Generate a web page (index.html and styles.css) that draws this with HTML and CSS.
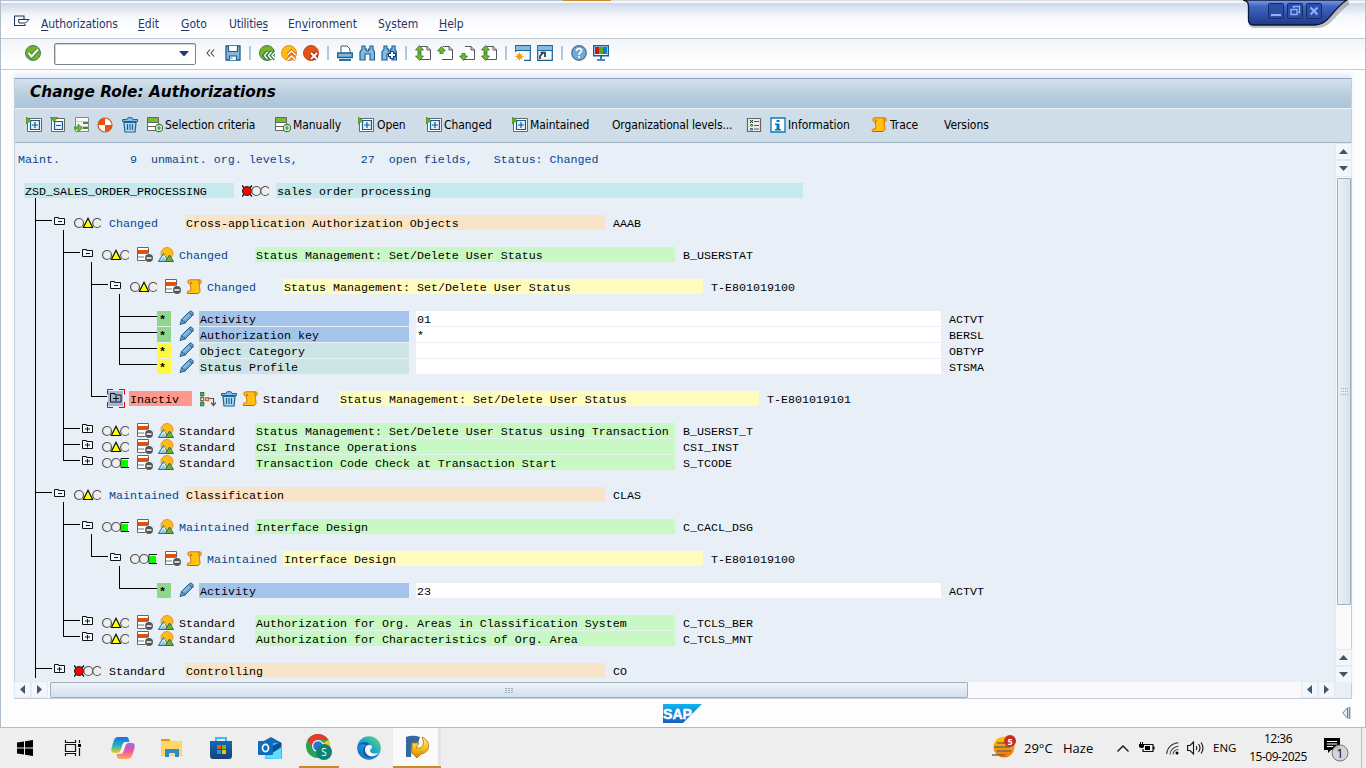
FILE: index.html
```html
<!DOCTYPE html>
<html lang="en">
<head>
<meta charset="utf-8">
<title>Change Role: Authorizations</title>
<link rel="stylesheet" href="styles.css">
</head>
<body>
<svg class="defs" aria-hidden="true">
  <defs>
    <linearGradient id="gSap" x2="0" y2="1"><stop offset="0" stop-color="#0bb6ee"/><stop offset="1" stop-color="#1c5cc0"/></linearGradient>
    <linearGradient id="gWin" x2="0" y2="1"><stop offset="0" stop-color="#7fa0e8"/><stop offset=".25" stop-color="#4166c2"/><stop offset="1" stop-color="#1d3a86"/></linearGradient>
    <linearGradient id="gCopA" x2="0" y2="1"><stop offset="0" stop-color="#1f6fe0"/><stop offset=".5" stop-color="#19b0c8"/><stop offset="1" stop-color="#e8d020"/></linearGradient>
    <linearGradient id="gCopB" x2="0" y2="1"><stop offset="0" stop-color="#9a6af0"/><stop offset=".5" stop-color="#f0529a"/><stop offset="1" stop-color="#ffb060"/></linearGradient>
    <linearGradient id="gEdge" x1="0" y1="1" x2="1" y2="0"><stop offset="0" stop-color="#1160b8"/><stop offset=".5" stop-color="#1aa0dc"/><stop offset="1" stop-color="#60e060"/></linearGradient>
    <linearGradient id="gSun" x2="0" y2="1"><stop offset="0" stop-color="#ffc800"/><stop offset="1" stop-color="#f07010"/></linearGradient>
    <linearGradient id="gStore" x2="0" y2="1"><stop offset="0" stop-color="#1568b8"/><stop offset="1" stop-color="#173f75"/></linearGradient>
    <linearGradient id="gGold" x2="0" y2="1"><stop offset="0" stop-color="#fff0a0"/><stop offset=".6" stop-color="#f8b810"/><stop offset="1" stop-color="#c88000"/></linearGradient>
  </defs>
  <symbol id="fm" viewBox="0 0 12 10"><path d="M.5 8.500V1.500h4v1h6v6z" fill="#f4f7fb" stroke="#111"/><path d="M4 5.500h4" stroke="#111"/></symbol>
  <symbol id="fp" viewBox="0 0 12 10"><path d="M.5 8.500V.500h4v1h6v7z" fill="#f4f7fb" stroke="#111"/><path d="M3 5h5M5.500 3v4.500" stroke="#111"/></symbol>
  <symbol id="ly" viewBox="0 0 27 12"><g fill="#eee" stroke="#555" stroke-width="1.200"><circle cx="5" cy="6" r="4.500"/><circle cx="23.200" cy="6" r="4.500"/></g><path d="M14 1.300L18.600 10.500H9.400z" fill="#ff0" stroke="#111" stroke-width="1.200"/></symbol>
  <symbol id="lg" viewBox="0 0 27 12"><g fill="#eee" stroke="#555" stroke-width="1.200"><circle cx="5" cy="6" r="4.500"/><circle cx="14" cy="6" r="4.500"/></g><path d="M27 1.500h-8v9h8" fill="#fff" stroke="#111"/><path d="M20 3h6v7h-6z" fill="#0f0"/></symbol>
  <symbol id="lr" viewBox="0 0 27 12"><path d="M0 .5l10 11M10 .5L0 11.500" stroke="#111" stroke-width="1.400"/><circle cx="5" cy="6" r="4.500" fill="#f00" stroke="#222"/><g fill="#eee" stroke="#555" stroke-width="1.200"><circle cx="14.300" cy="6" r="4.500"/><circle cx="23.200" cy="6" r="4.500"/></g></symbol>
  <symbol id="doc" viewBox="0 0 16 16"><path d="M.5 .5h11v13h-11z" fill="#fff" stroke="#666"/><path d="M1 3h10v3H1z" fill="#e05010"/><path d="M1 6.500h10M1 10h6" stroke="#777"/><circle cx="12" cy="11" r="4.500" fill="#fff"/><circle cx="12" cy="11" r="4" fill="#555"/><path d="M9.500 11h5" stroke="#fff" stroke-width="1.500"/></symbol>
  <symbol id="mt" viewBox="0 0 16 16"><circle cx="9" cy="6.500" r="6" fill="#fdbc14" stroke="#ee9420"/><path d="M.4 14.500L5.500 6.500l4.500 8z" fill="#8fc0dd" stroke="#28709a"/><path d="M3 12.500l3-4 1.500 4" fill="none" stroke="#fff"/><path d="M7.500 14.500L11.500 8l4 6.500z" fill="#70b32c" stroke="#277345"/></symbol>
  <symbol id="sc" viewBox="0 0 16 16"><path d="M3.500.8h10c2.500 0 2.500 4 0 4-.8 2.500.8 5 .5 7.500-.3 1.700-1.500 2.200-3 2.200H1.500c-1.500-2 1-3 3-2.500C5.500 10 4 7 4.300 5 1.500 5.500.8 1.200 3.500.8z" fill="#ffc20e" stroke="#dd6d12"/><path d="M4.300 5C7 5 5.500 2.500 4 3M13 1.200v3.500M1.500 14.500h10" fill="none" stroke="#d05a10"/></symbol>
  <symbol id="pn" viewBox="0 0 16 16"><path d="M1 14.500l1.500-5 8-8c1.500-1.500 5 1.500 3.500 3.500l-8 8z" fill="#6ba3d0" stroke="#1c5f94"/><path d="M3.500 11L11 3.500" stroke="#b9dcf0"/><path d="M10 2.500l3.500 3.500M2.500 9.500l4 3.500" stroke="#1c4f80"/></symbol>
  <symbol id="tr" viewBox="0 0 16 16"><path d="M.5 4.500V2.500h4.500l1-1.800h4l1 1.800h4.500v2z" fill="#8bbbe0" stroke="#15659b"/><path d="M2 5.500h12l-1 9.500H3z" fill="#b8d8ee" stroke="#15659b" stroke-width="1.200"/><path d="M5.500 7v6M8 7v6M10.500 7v6" stroke="#15659b" stroke-width="1.200"/></symbol>
  <symbol id="hi" viewBox="0 0 16 16"><path d="M2 4v9" stroke="#777"/><g fill="#fff" stroke-width="1.200"><path d="M.7 1.700h3v3h-3zM.7 11.700h3v3h-3z" fill="#80bc40" stroke="#337a3c"/><path d="M.7 6.700h3v3h-3z" stroke="#666"/><path d="M5.700 6.700h3v3h-3z" fill="#ffcc50" stroke="#e06510"/></g><path d="M9 7.500h4.500V14M11 11.500l2.500 3 2.500-3" fill="none" stroke="#555" stroke-width="1.200"/></symbol>
  <symbol id="ex" viewBox="0 0 16 16"><path d="M1.500 1.500h14v13h-14z" fill="#fff" stroke="#666"/><path d="M4.500 3.500h9v9h-9z" fill="#e6f1fa" stroke="#125c94" stroke-width="1.200"/><path d="M6 8h6M9 5v6" stroke="#125c94" stroke-width="1.200"/><path d="M0 0l5 3.500-5 3.500z" fill="#6aac22" stroke="#39803c" stroke-width=".6"/></symbol>
  <symbol id="co" viewBox="0 0 16 16"><path d="M1.500 1.500h13v13h-13z" fill="#fff" stroke="#666"/><path d="M4.500 4.500h8v8h-8z" fill="#e6f1fa" stroke="#125c94" stroke-width="1.200"/><path d="M6 8.500h5" stroke="#125c94"/><path d="M0 0h8L4 5z" fill="#6aac22" stroke="#39803c" stroke-width=".6"/></symbol>
  <symbol id="mv" viewBox="0 0 16 16"><path d="M1.500.5h13v14h-13z" fill="#f8f8f8" stroke="#888"/><path d="M2 4.500h12M2 9.500h12" stroke="#ccc"/><path d="M9 6h5M9 11h5" stroke="#3f8a2a" stroke-width="2"/><path d="M0 10h4V7l4.500 4L4 15v-3H0z" fill="#75b82a" stroke="#3a8038" stroke-width=".7"/></symbol>
  <symbol id="gen" viewBox="0 0 16 16"><circle cx="8" cy="8" r="7" fill="#fff" stroke="#d84e12" stroke-width="1.200"/><path d="M8 8V1A7 7 0 0 0 1 8zM8 8v7a7 7 0 0 0 7-7z" fill="#e05512"/></symbol>
  <symbol id="ad" viewBox="0 0 16 16"><path d="M.5.5h11v13H.5z" fill="#fff" stroke="#666"/><path d="M1 1h10v4H1z" fill="#78b82a"/><path d="M1 5.500h10M1 9.500h7" stroke="#666"/><circle cx="12" cy="11" r="3.700" fill="#e4f5e4" stroke="#3b843e" stroke-width="1.200"/><path d="M9.800 11h4.400M12 8.800v4.400" stroke="#3b843e" stroke-width="1.200"/></symbol>
  <symbol id="ls" viewBox="0 0 16 16"><path d="M1.500 1.500h13v13h-13z" fill="#eee" stroke="#666" stroke-width="1.200"/><path d="M8 4.500h5M8 8.500h5M8 12h5" stroke="#555"/><path d="M4 3h3v3H4z" fill="#f5c510"/><path d="M4 3l3 3M7 3L4 6" stroke="#333"/><path d="M4.500 7.500h2v1.500h-2z" fill="#fff" stroke="#27863c"/><path d="M4.500 11.500h2v1.500h-2z" fill="#fff" stroke="#17609b"/></symbol>
  <symbol id="in" viewBox="0 0 16 16"><path d="M1 1h14v14H1z" fill="#fff" stroke="#0878bd" stroke-width="1.300"/><path d="M6.500 3h3v2h-3zM5 6.500h4.500V12H11v1.500H5V12h1.500V8H5z" fill="#0878bd"/></symbol>
  <symbol id="ok" viewBox="0 0 16 16"><circle cx="8" cy="8" r="7.500" fill="#70b42a" stroke="#418445" /><path d="M3.500 8l3 3.500L13 4.500" fill="none" stroke="#418445" stroke-width="4"/><path d="M3.500 8l3 3.500L13 4.500" fill="none" stroke="#fff" stroke-width="2"/></symbol>
  <symbol id="sv" viewBox="0 0 16 16"><path d="M1 1h14v14H1z" fill="#8bb8d8" stroke="#115f95" stroke-width="1.300"/><path d="M3.500 1v5.500h9V1M4.500 15v-4h7v4" fill="#fff" stroke="#115f95" stroke-width="1.200"/><path d="M5.500 12h2v2h-2z" fill="#8bb8d8"/></symbol>
  <symbol id="bk" viewBox="0 0 16 16"><circle cx="8" cy="8" r="7.500" fill="#73b52b" stroke="#40834a"/><path d="M8.500 6.500L5 10.500l3.500 4M12.500 6.500L9 10.500l3.500 4M16 6.500L12.500 10.500l3.500 4" fill="none" stroke="#31783c" stroke-width="3.200"/><path d="M8.500 7L5.500 10.500l3 3.500M12.500 7l-3 3.500 3 3.500M16 7l-3 3.500 3 3.500" fill="none" stroke="#fff" stroke-width="1.400"/></symbol>
  <symbol id="xt" viewBox="0 0 16 16"><circle cx="8" cy="8" r="7.500" fill="#fdbb13" stroke="#ea9212"/><path d="M6.500 10l4-4 4 4M6.500 15l4-4 4 4" fill="none" stroke="#df6512" stroke-width="3.200"/><path d="M6.500 10l4-4 4 4M6.500 15l4-4 4 4" fill="none" stroke="#fff" stroke-width="1.500"/></symbol>
  <symbol id="cn" viewBox="0 0 16 16"><circle cx="8" cy="8" r="7.500" fill="#df5515" stroke="#c14816"/><path d="M8 8l6 6M14 8l-6 6" stroke="#a92f12" stroke-width="4"/><path d="M8 8l6 6M14 8l-6 6" stroke="#fff" stroke-width="2"/></symbol>
  <symbol id="pr" viewBox="0 0 16 16"><path d="M4 8V1h6l3 3v4" fill="#fff" stroke="#555"/><path d="M.7 8h14.600v4.500H.7z" fill="#88b8dc" stroke="#14619a" stroke-width="1.300"/><path d="M2 15h12" stroke="#14619a" stroke-width="1.800"/></symbol>
  <symbol id="fd" viewBox="0 0 16 16"><path d="M3 1h3v3h1.500v2h2V4H11V1h3v3l1.500 3v8H11V9H6v6H1V7l2-3z" fill="#8bb9dc" stroke="#15639a" stroke-width="1.200"/></symbol>
  <symbol id="fn" viewBox="0 0 16 16"><use href="#fd"/><path d="M11 6v8M7 10h8" stroke="#173f7e" stroke-width="4.500"/><path d="M11 7v6M8 10h6" stroke="#fff" stroke-width="2"/></symbol>
  <symbol id="pg" viewBox="0 0 16 16"><path d="M6 1.500h6l3.500 3.500v9.500H5" fill="#fff" stroke="#555"/><path d="M12 1v4h4" fill="none" stroke="#555"/></symbol>
  <symbol id="au" viewBox="0 0 9 8"><path d="M4.500.5L8.500 5H6v3H3V5H.5z" fill="#74b62a" stroke="#35743d" stroke-width=".8"/></symbol>
  <symbol id="p1" viewBox="0 0 16 16"><use href="#pg"/><use href="#au" width="9" height="8"/><use href="#au" width="9" height="8" transform="translate(0 16) scale(1 -1)"/></symbol>
  <symbol id="p2" viewBox="0 0 16 16"><use href="#pg"/><use href="#au" y="1" width="9" height="8"/></symbol>
  <symbol id="p3" viewBox="0 0 16 16"><use href="#pg"/><use href="#au" width="9" height="8" transform="translate(0 16) scale(1 -1)"/></symbol>
  <symbol id="p4" viewBox="0 0 16 16"><use href="#pg"/><use href="#au" width="9" height="8"/><use href="#au" width="9" height="8" transform="translate(0 16) scale(1 -1)"/></symbol>
  <symbol id="w0" viewBox="0 0 16 16"><path d="M.7.7h14.600v14.600H.7z" fill="#f4f8fc" stroke="#15649c" stroke-width="1.200"/><path d="M1 1h14v4H1z" fill="#8bb8dc"/><path d="M1 5.500h14" stroke="#15649c"/></symbol>
  <symbol id="w1" viewBox="0 0 16 16"><use href="#w0"/><path d="M0 7h9v9H0z" fill="#fff"/><circle cx="4.500" cy="11.500" r="2.800" fill="#fdb515"/><path d="M4.500 7.500v8M.5 11.500h8M1.500 8.500l6 6M7.500 8.500l-6 6" stroke="#f39b15"/></symbol>
  <symbol id="w2" viewBox="0 0 16 16"><use href="#w0"/><path d="M3 14V11l4-4M3.500 7.500H8V12" fill="none" stroke="#333" stroke-width="1.700"/></symbol>
  <symbol id="hp" viewBox="0 0 16 16"><circle cx="8" cy="8" r="7.300" fill="#74a9d4" stroke="#456f94" stroke-width="1.200"/><path d="M5.500 6C5.500 2.500 11 3 10.500 6 10.300 7.500 8 7.500 8 10M8 11v2" fill="none" stroke="#fff" stroke-width="1.700"/></symbol>
  <symbol id="mo" viewBox="0 0 16 16"><path d="M.7.7h14.600v10H.7z" fill="#fff" stroke="#16619a" stroke-width="1.400"/><path d="M2 2h4v7H2z" fill="#d8101d"/><path d="M6 2h4v7H6z" fill="#58a812"/><path d="M10 2h4v7h-4z" fill="#087fc7"/><path d="M8 11v3M4 15h8" stroke="#16619a" stroke-width="1.700"/></symbol>
</svg>

<div class="window">
  <div class="topline"><i></i><b></b></div>
  <div class="menubar">
    <svg class="cmd" viewBox="0 0 16 13"><path d="M8 10.500H.5V1H10v3M11 9v1.500H7" fill="none" stroke="#1f3560" stroke-width="1.100"/><path d="M4.500 4.500H15L11.500 8H5z" fill="#fff" stroke="#1f3560"/></svg>
    <span class="m1"><u>A</u>uthorizations</span><span class="m2"><u>E</u>dit</span><span class="m3"><u>G</u>oto</span><span class="m4">Utilitie<u>s</u></span><span class="m5">En<u>v</u>ironment</span><span class="m6">S<u>y</u>stem</span><span class="m7"><u>H</u>elp</span>
  </div>
  <div class="stdbar">
    <svg class="i ok"><use href="#ok"/></svg>
    <div class="combo"><svg width="10" height="6"><path d="M0 0h10L5 5.500z" fill="#1d3d70"/></svg></div>
    <svg class="chev" width="9" height="8" viewBox="0 0 9 8"><path d="M4 .5L1 4l3 3.500M8 .5L5 4l3 3.500" fill="none" stroke="#444" stroke-width="1.100"/></svg>
    <svg class="i"><use href="#sv"/></svg><hr>
    <svg class="i"><use href="#bk"/></svg><svg class="i"><use href="#xt"/></svg><svg class="i"><use href="#cn"/></svg><hr>
    <svg class="i"><use href="#pr"/></svg><svg class="i"><use href="#fd"/></svg><svg class="i"><use href="#fn"/></svg><hr>
    <svg class="i"><use href="#p1"/></svg><svg class="i"><use href="#p2"/></svg><svg class="i"><use href="#p3"/></svg><svg class="i"><use href="#p4"/></svg><hr>
    <svg class="i"><use href="#w1"/></svg><svg class="i"><use href="#w2"/></svg><hr>
    <svg class="i"><use href="#hp"/></svg><svg class="i"><use href="#mo"/></svg>
  </div>

  <main class="panel">
    <h1>Change Role: Authorizations</h1>
    <div class="appbar">
      <span class="a24"><svg class="i"><use href="#ex"/></svg></span><span class="a24"><svg class="i"><use href="#co"/></svg></span><span class="a23"><svg class="i"><use href="#mv"/></svg></span><span class="a24"><svg class="i"><use href="#gen"/></svg></span><span class="a26"><svg class="i"><use href="#tr"/></svg></span>
      <span class="sel"><svg class="i"><use href="#ad"/></svg>Selection criteria</span>
      <span class="man"><svg class="i"><use href="#ad"/></svg>Manually</span>
      <span class="opn"><svg class="i"><use href="#ex"/></svg>Open</span>
      <span class="chg"><svg class="i"><use href="#ex"/></svg>Changed</span>
      <span class="mnt"><svg class="i"><use href="#ex"/></svg>Maintained</span>
      <span class="org">Organizational levels...</span>
      <span class="a24"><svg class="i"><use href="#ls"/></svg></span>
      <span class="inf"><svg class="i"><use href="#in"/></svg>Information</span>
      <span class="trc"><svg class="i"><use href="#sc"/></svg>Trace</span>
      <span class="ver">Versions</span>
    </div>
    <div class="body">
      <div class="list">
        <div class="summary">Maint.          9  unmaint. org. levels,         27  open fields,   Status: Changed</div>
        <div class="root"><span class="role">ZSD_SALES_ORDER_PROCESSING</span><svg class="l"><use href="#lr"/></svg><span class="roletext">sales order processing</span></div>
        <ul class="tree">
          <li class="gap"><div class="row"><hr><svg class="f"><use href="#fm"/></svg><svg class="l"><use href="#ly"/></svg><em>Changed</em><span class="d cls">Cross-application Authorization Objects</span>AAAB</div>
            <ul>
              <li class="gap"><div class="row"><hr><svg class="f"><use href="#fm"/></svg><svg class="l"><use href="#ly"/></svg><svg class="i"><use href="#doc"/></svg><svg class="i"><use href="#mt"/></svg><em>Changed</em><span class="d obj">Status Management: Set/Delete User Status</span>B_USERSTAT</div>
                <ul>
                  <li class="gap"><div class="row"><hr><svg class="f"><use href="#fm"/></svg><svg class="l"><use href="#ly"/></svg><svg class="i"><use href="#doc"/></svg><svg class="i"><use href="#sc"/></svg><em>Changed</em><span class="d aut">Status Management: Set/Delete User Status</span>T-E801019100</div>
                    <ul>
                      <li class="gap"><div class="row field"><hr><b class="star">*</b><svg class="p"><use href="#pn"/></svg><span class="name set">Activity</span><span class="val">01</span>ACTVT</div></li>
                      <li><div class="row field"><hr><b class="star">*</b><svg class="p"><use href="#pn"/></svg><span class="name set">Authorization key</span><span class="val">*</span>BERSL</div></li>
                      <li><div class="row field"><hr><b class="star open">*</b><svg class="p"><use href="#pn"/></svg><span class="name">Object Category</span><span class="val"></span>OBTYP</div></li>
                      <li><div class="row field"><hr><b class="star open">*</b><svg class="p"><use href="#pn"/></svg><span class="name">Status Profile</span><span class="val"></span>STSMA</div></li>
                    </ul>
                  </li>
                  <li class="gap"><div class="row inactive"><hr><svg class="focus" viewBox="0 0 18 19"><path d="M1 2h15v15H1z" fill="#a0b8d4"/><path d="M.5 5.500V.500H6M12 .5h5.500v5M.5 13v5.500H6M12 18.500h5.500V13" fill="none" stroke="#e00000"/><path d="M3.500 13V4.500H8v1.500h6V13z" fill="none" stroke="#111"/><path d="M6 9.500h6M9 7v5" stroke="#111"/></svg><span class="flag">Inactiv</span><svg class="i first"><use href="#hi"/></svg><svg class="i"><use href="#tr"/></svg><svg class="i"><use href="#sc"/></svg><em class="std">Standard</em><span class="d aut">Status Management: Set/Delete User Status</span>T-E801019101</div></li>
                </ul>
              </li>
              <li class="gap"><div class="row"><hr><svg class="f"><use href="#fp"/></svg><svg class="l"><use href="#ly"/></svg><svg class="i"><use href="#doc"/></svg><svg class="i"><use href="#mt"/></svg><em class="std">Standard</em><span class="d obj">Status Management: Set/Delete User Status using Transaction</span>B_USERST_T</div></li>
              <li><div class="row"><hr><svg class="f"><use href="#fp"/></svg><svg class="l"><use href="#ly"/></svg><svg class="i"><use href="#doc"/></svg><svg class="i"><use href="#mt"/></svg><em class="std">Standard</em><span class="d obj">CSI Instance Operations</span>CSI_INST</div></li>
              <li><div class="row"><hr><svg class="f"><use href="#fp"/></svg><svg class="l"><use href="#lg"/></svg><svg class="i"><use href="#doc"/></svg><svg class="i"><use href="#mt"/></svg><em class="std">Standard</em><span class="d obj">Transaction Code Check at Transaction Start</span>S_TCODE</div></li>
            </ul>
          </li>
          <li class="gap"><div class="row"><hr><svg class="f"><use href="#fm"/></svg><svg class="l"><use href="#ly"/></svg><em>Maintained</em><span class="d cls">Classification</span>CLAS</div>
            <ul>
              <li class="gap"><div class="row"><hr><svg class="f"><use href="#fm"/></svg><svg class="l"><use href="#lg"/></svg><svg class="i"><use href="#doc"/></svg><svg class="i"><use href="#mt"/></svg><em>Maintained</em><span class="d obj">Interface Design</span>C_CACL_DSG</div>
                <ul>
                  <li class="gap"><div class="row"><hr><svg class="f"><use href="#fm"/></svg><svg class="l"><use href="#lg"/></svg><svg class="i"><use href="#doc"/></svg><svg class="i"><use href="#sc"/></svg><em>Maintained</em><span class="d aut">Interface Design</span>T-E801019100</div>
                    <ul>
                      <li class="gap"><div class="row field"><hr><b class="star">*</b><svg class="p"><use href="#pn"/></svg><span class="name set">Activity</span><span class="val">23</span>ACTVT</div></li>
                    </ul>
                  </li>
                </ul>
              </li>
              <li class="gap"><div class="row"><hr><svg class="f"><use href="#fp"/></svg><svg class="l"><use href="#ly"/></svg><svg class="i"><use href="#doc"/></svg><svg class="i"><use href="#mt"/></svg><em class="std">Standard</em><span class="d obj">Authorization for Org. Areas in Classification System</span>C_TCLS_BER</div></li>
              <li><div class="row"><hr><svg class="f"><use href="#fp"/></svg><svg class="l"><use href="#ly"/></svg><svg class="i"><use href="#doc"/></svg><svg class="i"><use href="#mt"/></svg><em class="std">Standard</em><span class="d obj">Authorization for Characteristics of Org. Area</span>C_TCLS_MNT</div></li>
            </ul>
          </li>
          <li class="gap more"><div class="row"><hr><svg class="f"><use href="#fp"/></svg><svg class="l"><use href="#lr"/></svg><em class="std">Standard</em><span class="d cls">Controlling</span>CO</div></li>
        </ul>
      </div>
      <div class="vbar">
        <span class="btn"><svg width="9" height="5"><path d="M0 5L4.500 0 9 5z"/></svg></span><span class="btn"><svg width="9" height="5"><path d="M0 0h9L4.500 5z"/></svg></span>
        <div class="thumb"><svg width="7" height="8"><path d="M0 .5h7M0 3.500h7M0 6.500h7" stroke="#9eabb8" stroke-dasharray="1 1"/></svg></div>
        <span class="btn push"><svg width="9" height="5"><path d="M0 5L4.500 0 9 5z"/></svg></span><span class="btn"><svg width="9" height="5"><path d="M0 0h9L4.500 5z"/></svg></span>
      </div>
    </div>
    <div class="hbar">
      <span class="btn"><svg width="5" height="9"><path d="M5 0v9L0 4.500z"/></svg></span><span class="btn"><svg width="5" height="9"><path d="M0 0v9l5-4.500z"/></svg></span>
      <div class="thumb"><svg width="8" height="7"><path d="M0 1.500h8M0 3.500h8M0 5.500h8" stroke="#9eabb8" stroke-dasharray="2 1"/></svg></div>
      <span class="btn push"><svg width="5" height="9"><path d="M5 0v9L0 4.500z"/></svg></span><span class="btn"><svg width="5" height="9"><path d="M0 0v9l5-4.500z"/></svg></span>
    </div>
  </main>
  <footer class="status">
    <svg class="sap" viewBox="0 0 39 19"><path d="M0 0h39L20 19H0z" fill="url(#gSap)"/><text x="0" y="15" font-size="15.500" font-weight="700" fill="#fff" stroke="#fff" stroke-width=".5" textLength="29" lengthAdjust="spacingAndGlyphs">SAP</text></svg>
    <svg class="grip" width="9" height="12"><path d="M5.500.8L.8 6l4.700 5.200z" fill="#e8f1fa" stroke="#66809c"/><path d="M7.500 0v12" stroke="#7e91a8" stroke-width="1.800"/></svg>
  </footer>
  <svg class="wincorner" viewBox="0 0 106 30"><path d="M0 1c6 2 6 4 6 8v14c0 4 3 5 6 5h62c16 0 18-16 38-27z" fill="#777" opacity=".45"/><path d="M0 0c5 1 5.500 3 5.500 7v13c0 4 2 5 5 5H72C86 25 90 8 104 0z" fill="url(#gWin)" stroke="#0b1738" stroke-width="1.300"/><g fill="#2b4da2" stroke="#142c6c"><rect x="25.500" y="3.500" width="15" height="15" rx="1"/><rect x="44.500" y="3.500" width="15" height="15" rx="1"/><rect x="63.500" y="3.500" width="15" height="15" rx="1"/></g><path d="M28 15h10" stroke="#8fb0ff" stroke-width="2"/><path d="M50.500 8V6.500h6v6H55M48 9.500h6v5h-6z" fill="none" stroke="#8fb0ff" stroke-width="1.400"/><path d="M67.500 7.500l7 7M74.500 7.500l-7 7" stroke="#8fb0ff" stroke-width="2.200"/></svg>
</div>

<div class="taskbar">
  <span class="t"><svg width="16" height="16"><path d="M0 2.500L7 1.500v6H0zM8 1.300L16 0v7.500H8zM0 8.500h7v6l-7-1zM8 8.500h8V16l-8-1.200z"/></svg></span>
  <span class="t"><svg class="view" width="18" height="16" viewBox="0 0 18 16"><path d="M1.500 0v2.500h10V0M1.500 16v-2.500h10V16M1.500 4.500h10v7h-10zM15.500 0v3M15.500 8v8" fill="none" stroke="#111" stroke-width="1.200"/><path d="M14 4h3v3h-3z"/></svg></span>
  <span class="t cop"><svg width="24" height="22" viewBox="0 0 24 22"><path d="M7 0h8.500c2 0 2.500 2.500 3 5h-4c-2.500 0-3 2-4.500 7-1 3-1.500 4-4.500 4H3.500C-.5 16 0 12.500 1 9.500 3 3.500 3 0 7 0z" fill="url(#gCopA)"/><path d="M17 22H8.500c-2 0-2.500-2.500-3-5h4c2.500 0 3-2 4.500-7 1-3 1.500-4 4.500-4h2c4 0 3.500 3.500 2.500 6.500-2 6-2 9.500-6 9.500z" fill="url(#gCopB)"/><path d="M14 6.500l-3.500 9H9.500L13 6z" fill="#fff"/></svg></span>
  <span class="t"><svg width="22" height="18" viewBox="0 0 22 18"><path d="M0 0h8l2 2H0z" fill="#d99b0c"/><path d="M0 2h21v15H0z" fill="#ffd667"/><path d="M4 18v-8h14v8h-4v-4H8v4z" fill="#3388cc"/></svg></span>
  <span class="t"><svg width="24" height="24" viewBox="0 0 24 24"><path d="M7 5V2h10v3" fill="none" stroke="#38c0f0" stroke-width="2"/><path d="M1 5h22v14c0 3-1 4-3 4H4c-2 0-3-1-3-4z" fill="url(#gStore)"/><path d="M8 9h4v4H8z" fill="#f25022"/><path d="M13 9h4v4h-4z" fill="#7fba00"/><path d="M8 14h4v4H8z" fill="#00a4ef"/><path d="M13 14h4v4h-4z" fill="#ffb900"/></svg></span>
  <span class="t"><svg width="24" height="24" viewBox="0 0 24 24"><path d="M4 6l9-5 9 5v11H4z" fill="#1668b8"/><path d="M9 7h15v15c0 1-1 1-2 1H7z" fill="#33bdf2"/><path d="M14 10l9-4v5l-8 6z" fill="#0e4d96"/><path d="M5 22l18-10v10c0 1-1 1-2 1z" fill="#64dcf8"/><rect y="5" width="15" height="14" rx="1" fill="#0f6cbd"/><ellipse cx="7.500" cy="12" rx="3" ry="3.600" fill="none" stroke="#fff" stroke-width="1.700"/></svg></span>
  <span class="t run"><svg width="26" height="26" viewBox="0 0 26 26"><circle cx="12" cy="12" r="12" fill="#2da24c"/><path d="M12 12L1.600 6A12 12 0 0 1 22.400 6H12z" fill="#e33b2e"/><path d="M12 12l10.400-6A12 12 0 0 1 15 23.500z" fill="#fdc919"/><path d="M1.600 6l6 9 5-3L12 6z" fill="#e33b2e"/><circle cx="12" cy="12" r="6" fill="#fff"/><circle cx="12" cy="12" r="4.800" fill="#2d73d8"/><circle cx="18" cy="18" r="8" fill="#0a8375"/><text x="18" y="21.500" text-anchor="middle" font-size="10" fill="#fff">S</text></svg></span>
  <span class="t"><svg width="24" height="24" viewBox="0 0 24 24"><circle cx="12" cy="12" r="11.800" fill="url(#gEdge)"/><path d="M1 10c3-6 13-5 13 2 0 1-2 2-1 4 2 4 7 3 9 1-5 7-15 6-16-2C6 11 9 9 10 9 6 8 3 8 1 10z" fill="#1258aa"/><path d="M11 9c-3 1-4 5-2 8 2 4 8 5 13 0-3 1-8 1-9-2 0-2 2-2 2-4 0-1-2-3-4-2z" fill="#f5f5f5"/></svg></span>
  <span class="t active"><svg width="25" height="25" viewBox="0 0 25 25"><path d="M1 2c5-2 10-1 14 0l-2 6-6 2-1 12H1z" fill="#35689c"/><path d="M7 8h7l-3 5c7 1 9-4 6-11 9 4 9 15-1 17l-4 4-5-5z" fill="url(#gGold)" stroke="#b88318"/></svg></span>
  <div class="tray">
    <svg class="wx" width="24" height="24" viewBox="0 0 24 24"><circle cx="12" cy="12" r="10.500" fill="url(#gSun)"/><path d="M5 8h14M2 12h16M5 16h14M0 20h13" stroke="#716a5c" stroke-width="1.700"/><circle cx="18" cy="6" r="6" fill="#c62d26"/><text x="18" y="9.500" text-anchor="middle" font-size="9" font-weight="700" fill="#fff">5</text></svg>
    <span class="temp">29°C</span><span class="haze">Haze</span>
    <svg class="up" width="12" height="7"><path d="M.5 6.500L6 1l5.500 5.500" fill="none" stroke="#111" stroke-width="1.300"/></svg>
    <svg class="bat" width="16" height="12"><path d="M5 2.500h9v7H4V7M15 4.500v3" fill="none" stroke="#111" stroke-width="1.200"/><path d="M6 4h5v4H6zM0 2h5v3L3.500 6H2L0 5zM1 0h1v2H1zM3 0h1v2H3z"/></svg>
    <svg class="wifi" width="13" height="13"><path d="M.7 12C1 6 6 1 12.500.8M4 12.500C4 8 8 4.500 12.500 4.200M7 12.500c0-3 2.500-5 5.500-5" fill="none" stroke="#444" stroke-width="1.100"/><circle cx="11" cy="11" r="1.500"/></svg>
    <svg class="snd" width="17" height="14"><path d="M.6 4.500H3L6.500 1v12L3 9.500H.6zM9 5q1.500 2 0 4M11.500 3q3 4 0 8M14 1.500q4 5.500 0 11" fill="none" stroke="#111" stroke-width="1.100"/></svg>
    <span class="lang">ENG</span>
    <div class="clock">12:36<br>15-09-2025</div>
    <svg class="note" width="26" height="26" viewBox="0 0 26 26"><path d="M0 1h16v12H7l-3 3v-3H0z"/><path d="M3 4.500h10M3 7h10M3 9.500h6" stroke="#fff"/><circle cx="16" cy="16" r="8" fill="#d0d0d0" fill-opacity=".9" stroke="#777"/><text x="16" y="20.500" text-anchor="middle" font-size="12">1</text></svg>
  </div>
</div>
</body>
</html>
```
FILE: styles.css
```css
* { box-sizing: border-box; }
body { margin: 0; width: 1366px; height: 768px; overflow: hidden; background: #eee; font: 12px/16px "DejaVu Sans Condensed", "DejaVu Sans", sans-serif; font-stretch: condensed; color: #000; }
svg { display: block; flex: none; }
hr { border: 0; margin: 0; flex: none; }
ul { list-style: none; margin: 0; padding: 0; }
em { font-style: normal; }
.defs { position: absolute; width: 0; height: 0; }
.i { width: 16px; height: 16px; }

/* Window frame */
.window { position: relative; width: 1366px; height: 728px; display: flex; flex-direction: column; background: #fdfdfe; border-left: 1px solid #b0bdcb; border-right: 1px solid #b0bdcb; border-bottom: 1px solid #b0bdc8; }
.topline { height: 3px; display: flex; background: linear-gradient(#b4c1cf 0 1px, #f4f7fb 1px); }
.topline i { width: 48px; height: 1px; margin-left: 562px; background: #c98a2c; }
.topline b { flex: 1; height: 1px; background: #dcdfe2; }
.menubar { height: 36px; display: flex; align-items: center; padding: 6px 0 0 13px; color: #1d3768; background: linear-gradient(#ccd8e8, #f3f6fa 12px, #fff 26px); border-bottom: 1px solid #c0c8d4; }
.cmd { width: 16px; height: 13px; margin: -5px 11px 0 0; }
.m1 { width: 97px; letter-spacing: -.08px; } .m2 { width: 43px; } .m3 { width: 48px; } .m4 { width: 59px; letter-spacing: -.2px; } .m5 { width: 90px; } .m6 { width: 61px; }
.menubar u { text-underline-offset: 2px; }
.stdbar { height: 31px; display: flex; align-items: center; gap: 6px; padding: 0 0 3px 24px; background: linear-gradient(#f1f4f8, #fff 22px); border-bottom: 1px solid #c5cbd6; }
.stdbar hr { width: 2px; height: 14px; margin: 0 2px 0 2px; background: #b2c9dd; }
.ok { margin-right: 7px; }
.combo { width: 142px; height: 22px; position: relative; top: 1px; border: 1px solid #7d858c; border-radius: 2px; background: #fff; display: flex; align-items: center; justify-content: flex-end; padding-right: 6px; box-shadow: inset 1px 1px #d0d4d8; }
.chev { margin: 0 4px; }

/* Main panel */
.panel { width: 1338px; height: 621px; margin: 8px 0 0 13px; border: 1px solid #c3cede; border-top-color: #8fa4bb; display: flex; flex-direction: column; background: #e8eff7; box-shadow: 0 -4px 4px #e8edf4; }
h1 { height: 30px; margin: 0; padding: 0 15px; font: italic 700 15.35px/27px "DejaVu Sans", sans-serif; font-stretch: normal; background: linear-gradient(#d5e2ef, #bacfdd 50%, #abc3dc); border-bottom: 1px solid #edf3f9; }
.appbar { height: 34px; display: flex; align-items: center; padding: 0 0 2px 11px; background: #cfdde8; border-bottom: 1px solid #9fb3c6; }
.appbar span { display: flex; align-items: center; gap: 3px; white-space: nowrap; flex: none; letter-spacing: -.06px; }
.a24 { width: 24px; } .a23 { width: 23px; } .a26 { width: 25px; }
.a26, .a26 ~ .sel, .man { position: relative; left: 1px; }
.sel { width: 128px; } .man { width: 84px; } .opn { width: 68px; } .chg { width: 86px; } .mnt { width: 100px; } .inf { width: 101px; } .trc { width: 73px; }
.appbar .org { width: 134px; letter-spacing: -.14px; }
.appbar .mnt { gap: 2px; } .appbar .chg { gap: 2px; } .appbar .inf { gap: 2px; } .appbar .sel, .appbar .man { gap: 2px; }

/* Authorization list */
.body { height: 539px; display: flex; }
.list { flex: 1; height: 535px; overflow: hidden; font: 11.667px/18px "Liberation Mono", monospace; }
.summary { height: 16px; margin: 8px 0 16px 3px; white-space: pre; color: #0a4590; }
.root { display: flex; height: 16px; margin-left: 9px; }
.role, .roletext { height: 15px; padding-left: 1px; background: #c5e9ed; }
.role { width: 210px; }
.root .l { margin: 2px 7px 0 8px; }
.roletext { width: 527px; }
.tree { margin-left: 20px; }
.tree ul { margin-left: 28px; }
.tree li { position: relative; }
.tree li.gap { padding-top: 16px; }
.tree li::before { content: ""; position: absolute; left: 0; top: -1px; bottom: 0; border-left: 1px solid #000; }
.tree li:last-child::before { bottom: auto; height: 7px; }
.tree li.gap:last-child::before { height: 23px; }
.tree li.more::before { height: 40px !important; }
.row { display: flex; height: 16px; white-space: pre; }
.row hr { width: 17px; height: 1px; background: #000; margin: 5px 2px 0 0; }
.f { width: 12px; height: 10px; margin-top: 1px; }
.l { width: 27px; height: 12px; margin: 2px 1px 0 0; }
.row .l { margin-left: 8px; }
.row .i { margin-left: 5px; }
.row .l + .i { margin-left: 7px; }
.row em { width: 76px; margin-left: 5px; color: #0a4590; }
.row .l + em { margin-left: 7px; }
.row em.std { color: #000; }
.d { width: 420px; height: 15px; margin-right: 8px; padding-left: 1px; }
.cls { background: #f8e4c8; } .obj { background: #c8f8c4; } .aut { background: #fffcc0; }
.row.field hr { width: 38px; margin-right: 0; }
.star { width: 14px; height: 15px; padding-left: 2px; background: #90d68c; }
.star.open { background: #fff83c; }
.p { width: 16px; height: 16px; margin: -1px 4px 0 8px; }
.name { width: 210px; height: 15px; padding-left: 1px; background: #cce4e4; }
.name.set { background: #a4c4ec; }
.val { width: 525px; height: 15px; margin: 0 8px 0 7px; padding-left: 1px; background: #fff; }
.row.inactive hr { width: 16px; margin-right: 0; }
.focus { width: 18px; height: 19px; margin: -2px 4px 0 0; }
.flag { width: 63px; height: 15px; padding-left: 1px; background: #ff988c; }
.row .i.first { margin-left: 8px; }

/* Scroll bars */
.vbar { width: 16px; display: flex; flex-direction: column; gap: 2px; padding-top: 1px; background: #fafafb; border-left: 1px solid #e3e9f0; }
.btn { width: 15px; height: 15px; flex: none; display: flex; align-items: center; justify-content: center; background: #f3f6fa; box-shadow: 0 0 0 1px #e5eaf0; }
.btn svg { fill: #415769; }
.push { margin-top: auto; }
.thumb { display: flex; align-items: center; justify-content: center; border: 1px solid #a0afbb; border-radius: 1px; }
.vbar .thumb { width: 14px; height: 427px; margin-left: 1px; background: linear-gradient(90deg, #e8f1f8, #d6e4ee); }
.hbar { height: 16px; display: flex; gap: 2px; padding-right: 17px; background: linear-gradient(90deg, #fafafb 1320px, #e8eff7 1320px); }
.hbar .thumb { width: 918px; margin-left: 1px; background: linear-gradient(#edf4fa, #d3e0eb); }
.hbar .push { margin: 0 0 0 auto; }

/* Status line and window controls */
.status { flex: 1; display: flex; padding: 5px 14px 0 662px; background: #fdfdfd; font-family: "Liberation Sans", sans-serif; }
.sap { width: 39px; height: 19px; }
.grip { margin: 3px 0 0 auto; }
.wincorner { position: absolute; left: 1242px; top: 0; width: 106px; height: 30px; }

/* Taskbar */
.taskbar { height: 40px; display: flex; background: #eee; font: 12.500px/18px "Open Sans", "Noto Sans", sans-serif; }
.t { width: 49px; height: 40px; display: flex; align-items: center; justify-content: center; }
.view { margin-left: -2px; }
.cop svg { margin-left: 1px; }
.run { width: 40px; margin: 0 5px; border-bottom: 2px solid #c98a24; }
.active { width: 48px; background: linear-gradient(90deg, #fafafa 45px, #e4e4e4 45px); border-bottom: 2px solid #c98a24; }
.tray { flex: 1; display: flex; align-items: center; padding-right: 4px; }
.wx { margin: -2px 8px 0 551px; }
.temp { width: 39px; font-size: 13px; } .haze { width: 54px; font-size: 13px; }
.up { margin-right: 10px; } .bat { margin-right: 11px; } .wifi { margin-right: 8px; } .snd { margin-right: 9px; }
.lang { width: 36px; font-size: 11.500px; }
.clock { width: 58px; text-align: center; font-size: 12px; letter-spacing: -.5px; white-space: nowrap; }
.note { margin: 3px 0 0 17px; }
.tray::after { content: ""; width: 1px; height: 40px; margin-left: auto; background: #bbb; }
```
